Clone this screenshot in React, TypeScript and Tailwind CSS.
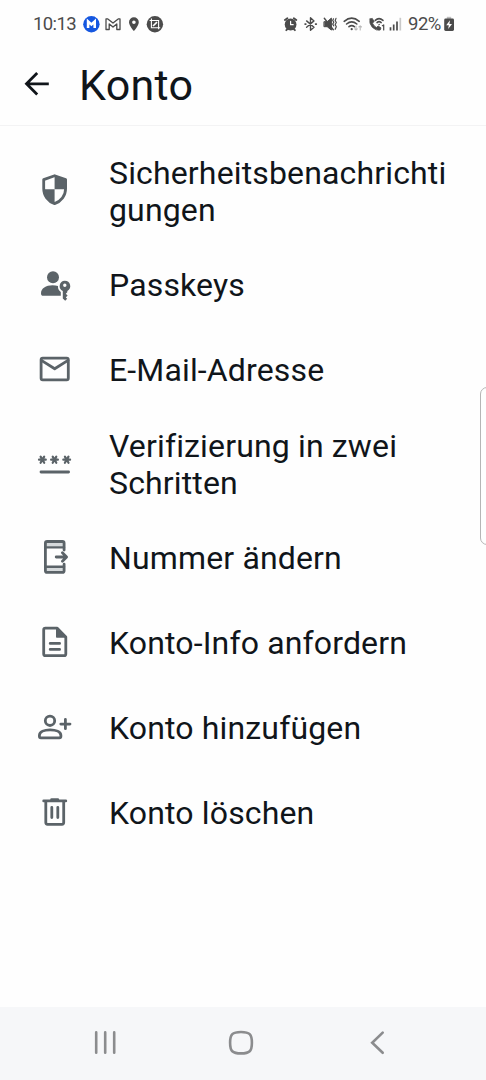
import type { ReactNode } from "react";

interface IconProps {
  children: ReactNode;
}

function RowIcon({ children }: IconProps) {
  return (
    <svg
      className="h-[41px] w-10 shrink-0 text-[#5b6368]"
      viewBox="0 0 40 41"
      fill="none"
      stroke="currentColor"
      strokeWidth="2.8"
      strokeLinecap="round"
      strokeLinejoin="round"
    >
      {children}
    </svg>
  );
}

function Asterisk({ x }: { x: number }) {
  return (
    <path
      d="M-3.4 0H3.4M-1.8 -3.1L1.8 3.1M1.8 -3.1L-1.8 3.1"
      transform={`translate(${x} 16.7)`}
      strokeWidth="2.2"
    />
  );
}

const items = [
  {
    label: "Sicherheitsbenachrichtigungen",
    tall: true,
    icon: (
      <>
        <path d="M20.6 5.7L31.6 9.6V18.5C31.6 25.6 27.2 31.4 20.6 33.6C14 31.4 9.7 25.6 9.7 18.5V9.6Z" />
        <path d="M20.6 5.7L31.6 9.6V19.3H20.6ZM20.6 19.3V33.6C14.5 31.4 10.2 26 9.8 19.3Z" fill="currentColor" stroke="none" />
      </>
    ),
  },
  {
    label: "Passkeys",
    icon: (
      <g fill="currentColor" stroke="none">
        <circle cx="19" cy="13.2" r="6" />
        <path d="M7 29.5C7 24.3 12 21.3 18.5 21.3C20.5 21.3 22.4 21.6 24 22.1C23.8 24.8 24.8 26.7 26.8 28V31.8H9.2C7.8 31.8 7 31 7 29.5Z" />
        <path
          fillRule="evenodd"
          d="M30.8 16.7A5.4 5.4 0 0 1 33.3 26.9V28.2L31.8 29.8L33.6 31.6L31.8 33.4L33.2 34.8L31.2 36.8L28.8 34.6V27A5.4 5.4 0 0 1 30.8 16.7ZM30.8 19.6A1.7 1.7 0 1 0 30.8 23A1.7 1.7 0 1 0 30.8 19.6Z"
        />
      </g>
    ),
  },
  {
    label: "E-Mail-Adresse",
    icon: (
      <>
        <rect x="7.1" y="9.1" width="27.2" height="21.8" rx="1.6" />
        <path d="M7.4 11.4L20.7 19.8L34 11.4" />
      </>
    ),
  },
  {
    label: "Verifizierung in zwei Schritten",
    tall: true,
    icon: (
      <>
        <Asterisk x={8.4} />
        <Asterisk x={20.5} />
        <Asterisk x={32.7} />
        <path d="M7 29H34.6" />
      </>
    ),
  },
  {
    label: "Nummer ändern",
    icon: (
      <>
        <path d="M12 5H30V9.5H12ZM12 30.5H30V35H12Z" fill="#d5d9db" stroke="none" />
        <path d="M30.1 13V6.2Q30.1 4.5 28.4 4.5H13.1Q11.4 4.5 11.4 6.2V33.7Q11.4 35.4 13.1 35.4H28.4Q30.1 35.4 30.1 33.7V27.2" />
        <path d="M11.4 10.4H30M11.4 29.7H30" strokeWidth="2.4" />
        <path d="M22.2 20H32.3M28.4 15.8L32.6 20L28.4 24.2" />
      </>
    ),
  },
  {
    label: "Konto-Info anfordern",
    icon: (
      <>
        <path d="M11.4 6.1H23L31.8 14.9V31.9Q31.8 33.6 30.1 33.6H11.4Q9.7 33.6 9.7 31.9V7.8Q9.7 6.1 11.4 6.1Z" />
        <path d="M22.8 6.1V15H31.8Z" fill="currentColor" strokeWidth="1.6" />
        <path d="M16.2 21.4H25.6M16.2 27.4H25.6" />
      </>
    ),
  },
  {
    label: "Konto hinzufügen",
    icon: (
      <>
        <circle cx="16" cy="13.8" r="4.7" />
        <path d="M5.4 28.6C5.4 24.8 10.4 22.9 16.1 22.9C21.8 22.9 26.9 24.8 26.9 28.6V29.3Q26.9 30.8 25.4 30.8H6.9Q5.4 30.8 5.4 29.3Z" />
        <path d="M31.4 12.5V21.7M26.8 17.1H36" />
      </>
    ),
  },
  {
    label: "Konto löschen",
    icon: (
      <>
        <path d="M9.7 8.9H31.8M17.6 7.6H23.8" />
        <path d="M11.8 9.5V30.6Q11.8 32.3 13.5 32.3H28Q29.7 32.3 29.7 30.6V9.5" />
        <path d="M17.8 15.4V25.6M23.8 15.4V25.6" />
      </>
    ),
  },
];

function StatusBar() {
  return (
    <div className="flex h-12 items-center justify-between pr-[31px] pl-[33px] text-[#4b4b4b]">
      <div className="flex items-center">
        <span className="w-[50px] text-[18.5px] leading-6 tracking-[-0.6px]">10:13</span>
        <svg className="h-5 w-[82px]" viewBox="83 14.5 82 20">
          <circle cx="91.4" cy="24.7" r="8.2" fill="#1557e0" />
          <path d="M88.1 28.4V22L91.4 25L94.7 22V28.4" fill="none" stroke="#fff" strokeWidth="2.6" />
          <path
            d="M106 30V19.4H107.8L113 23.6L118.2 19.4H120V30H116.8V24.4L113 27.6L109.2 24.4V30Z"
            fill="none"
            stroke="currentColor"
            strokeWidth="1.3"
            strokeLinejoin="round"
          />
          <path
            fill="currentColor"
            fillRule="evenodd"
            d="M133.9 17.8A4.9 4.9 0 0 1 138.8 22.7C138.8 26 133.9 31.5 133.9 31.5S129 26 129 22.7A4.9 4.9 0 0 1 133.9 17.8ZM133.9 20.9A1.8 1.8 0 1 0 133.9 24.5A1.8 1.8 0 1 0 133.9 20.9Z"
          />
          <circle cx="154.9" cy="24.7" r="8.2" fill="currentColor" />
          <g fill="none" stroke="#fff" strokeWidth="1.1">
            <path d="M149.6 21H158.6V29.8M151.4 19V28.2H160.2" />
            <path d="M153 26.5L157 22.7" strokeWidth="1.7" />
          </g>
        </svg>
      </div>
      <div className="flex items-center">
        <svg className="h-5 w-[123px]" viewBox="283 14.5 123 20">
          <g fill="none" stroke="currentColor" strokeLinecap="round" strokeLinejoin="round">
            <circle cx="290.6" cy="25" r="5.9" fill="currentColor" stroke="none" />
            <path d="M284.9 20.5L287.4 18.7M296.3 20.5L293.8 18.7M286.3 30.7L287.4 29.6M294.9 30.7L293.8 29.6" strokeWidth="1.9" />
            <path d="M290.6 21.8V25.2H293.2" stroke="#fff" strokeWidth="1.2" />
            <path d="M306.6 21.4L314 27.7L310.5 30.8V18.3L314 21.4L306.6 27.7" strokeWidth="1.4" />
            <path d="M305.1 24.6H305.8M315.6 24.6H316.3" strokeWidth="1.7" />
            <path d="M324.3 22.2H327.2L331.4 18.6V30.6L327.2 27.2H324.3Z" fill="currentColor" strokeWidth="1" />
            <path d="M324.3 18.8L333.3 30.3" strokeWidth="1.4" />
            <path d="M333.5 19.3L332.7 21L333.8 22.7L332.7 24.6L333.8 26.3M336 18.9L335.2 21L336.3 23L335.2 25L336.3 27.2L335.2 29.8" strokeWidth="1.2" />
            <path d="M344.2 21.8Q351.7 15.3 359.2 21.8M346.6 24.5Q351.7 20.2 356.8 24.5M349 27.2Q351.7 25 354.4 27.2" strokeWidth="1.6" />
            <path d="M351.7 29.6V29.7" strokeWidth="2.2" />
            <path d="M356 26.5V30.5M354.7 29.3L356 30.5L357.3 29.3M360.2 30.5V26.3M358.9 27.5L360.2 26.3L361.5 27.5" stroke="#b9b9b9" strokeWidth="1.1" />
            <path
              d="M370 19.5L372.3 18.9L374.1 22L372.5 23.7Q373.7 26.5 376.4 28L378.2 26.5L381 28.4L380.2 30.5Q376.2 31.6 372.3 27.8Q368.8 23.8 370 19.5Z"
              fill="currentColor"
              strokeWidth="0.8"
            />
            <path d="M375.2 20.9Q379 17.4 383 20.9M377 23.1Q379 21.2 381.2 23.1" strokeWidth="1.5" />
            <path d="M379.1 25V25.1" strokeWidth="1.5" />
            <path d="M382.4 26.2L383.7 25.4V30.4" strokeWidth="1.2" />
            <g strokeLinecap="butt" strokeWidth="1.7">
              <path d="M390.5 27.8V31M393.7 25V31M397 22V31" />
              <path d="M400.3 18.3V31" stroke="#c9c9c9" />
            </g>
          </g>
        </svg>
        <span className="ml-0.5 w-[34px] text-[18.5px] leading-6 tracking-[-0.5px]">92%</span>
        <svg className="ml-px h-5 w-3" viewBox="443 14.5 12 20">
          <rect x="446.8" y="17.3" width="4.4" height="3" fill="#bdbdbd" />
          <rect x="444.2" y="19" width="9.8" height="12.4" rx="1.4" fill="currentColor" />
          <path d="M450 20.8L446.2 25.8H448.8L448.2 29.6L452 24.5H449.4Z" fill="#fff" />
        </svg>
      </div>
    </div>
  );
}

function NavBar() {
  return (
    <nav className="flex h-[73px] items-center justify-between bg-[#f6f7f9] pr-[95px] pb-px pl-[91px] text-[#8b8c8e]">
      <svg className="h-7 w-7" viewBox="0 0 28 28" fill="none" stroke="currentColor" strokeWidth="2.6" strokeLinecap="round">
        <path d="M5.2 3.4V23.8M14.2 3.4V23.8M23.2 3.4V23.8" />
      </svg>
      <svg className="h-7 w-7" viewBox="0 0 28 28" fill="none" stroke="currentColor" strokeWidth="2.6">
        <path d="M14 3C22.6 3 24.9 5.2 24.9 13.7S22.6 24.4 14 24.4S3.1 22.2 3.1 13.7S5.4 3 14 3Z" />
      </svg>
      <svg className="h-7 w-7" viewBox="0 0 28 28" fill="none" stroke="currentColor" strokeWidth="2.6" strokeLinecap="round">
        <path d="M19.7 3.6L9.2 13.7L19.7 23.8" />
      </svg>
    </nav>
  );
}

export default function App() {
  return (
    <div className="relative flex h-[1080px] w-[486px] flex-col overflow-hidden bg-[#fefefe] font-['Roboto',sans-serif] text-[#10151a]">
      <StatusBar />
      <header className="flex h-[78px] items-center border-b border-[#f3f3f4] pb-1 pl-[22px]">
        <svg className="h-[30px] w-[30px]" viewBox="0 0 30 30" fill="none" stroke="currentColor" strokeWidth="2.8">
          <path d="M26.8 13.8H5M15.2 3.1L4.5 13.8L15.2 24.5" />
        </svg>
        <h1 className="ml-[27px] text-[43px] leading-[50px] tracking-[0.3px]">Konto</h1>
      </header>

      <ul className="flex-1 pt-[13px]">
        {items.map((item) => (
          <li
            key={item.label}
            className={`flex items-center pl-[34px] ${item.tall ? "h-[103px]" : "h-[85px]"}`}
          >
            <RowIcon>{item.icon}</RowIcon>
            <span className="ml-[35px] w-[344px] pt-[2px] text-[32px] leading-[37px] tracking-[0.15px] wrap-anywhere">
              {item.label}
            </span>
          </li>
        ))}
      </ul>

      <NavBar />

      {/* edge panel handle */}
      <div className="absolute top-[387px] -right-2 h-[158px] w-[14px] rounded-[7px] border border-[#b5b5b5]" />
    </div>
  );
}
